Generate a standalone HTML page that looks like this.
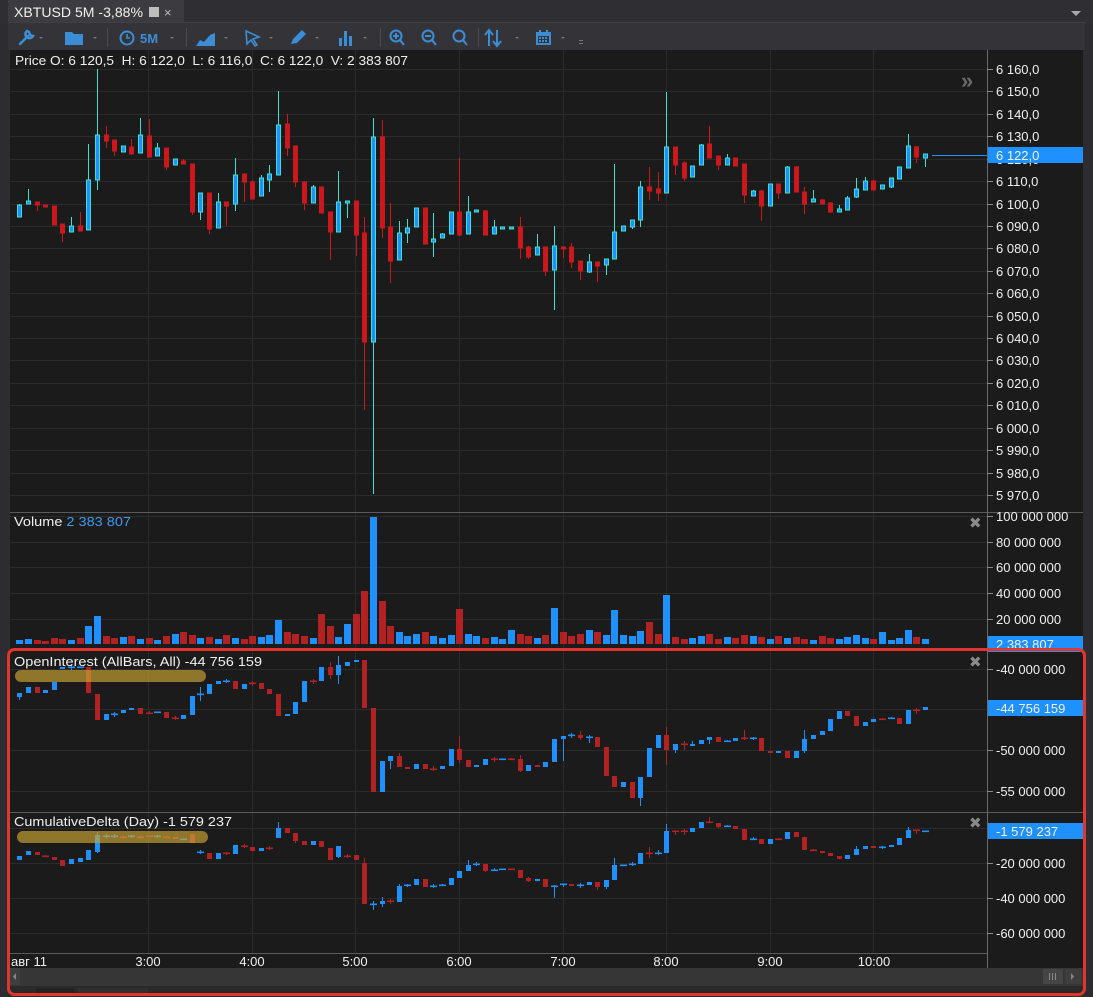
<!DOCTYPE html>
<html><head><meta charset="utf-8">
<style>
*{margin:0;padding:0;box-sizing:border-box}
html,body{width:1093px;height:997px;overflow:hidden;background:#2d2d31;font-family:"Liberation Sans","DejaVu Sans",sans-serif}
svg{display:block}
</style></head>
<body>
<svg id="s" width="1093" height="997" xmlns="http://www.w3.org/2000/svg" font-family="Liberation Sans, DejaVu Sans, sans-serif">
<rect x="0" y="0" width="1093" height="24" fill="#2e2e33"/>
<rect x="8" y="0" width="176" height="23" fill="#3b3b40"/>
<text x="14" y="17" font-size="13.5" fill="#f0f0f0" textLength="129" lengthAdjust="spacingAndGlyphs">XBTUSD 5M -3,88%</text>
<rect x="149" y="7" width="10" height="10" fill="#bdbdbd"/>
<text x="164" y="17" font-size="13" fill="#bdbdbd">×</text>
<path d="M1071 11 L1081 11 L1076 16 Z" fill="#aaa"/>
<rect x="8" y="22" width="1077" height="28" fill="#333338"/>
<line x1="8" y1="22.5" x2="1085" y2="22.5" stroke="#3f3f46"/>
<g fill="#3b8ed6" stroke="#3b8ed6">
 <path d="M20 44 L28 36 M27 31 a4 4 0 1 0 6 5 l-3 -1 l-1 -3 z" stroke-width="2.5" fill="none" stroke-linecap="round"/>
 <path d="M65 32 h7 l2 2 h9 v11 h-18 z" stroke="none"/>
 <circle cx="127" cy="38" r="6.5" fill="none" stroke-width="2"/>
 <path d="M127 34 v4 h3" fill="none" stroke-width="1.6"/>
 <path d="M196 46 L200 40 L204 42 L210 35 L215 33 L215 46 Z" stroke="none"/>
 <path d="M246 31 L259 37 L253 39 L257 45 L255 46 L251 40 L247 44 Z" fill="none" stroke-width="1.6"/>
 <path d="M291 44 L293 39 L302 30 L306 34 L297 43 Z" stroke="none"/>
 <rect x="339" y="38" width="3" height="8" stroke="none"/><rect x="344" y="31" width="3" height="15" stroke="none"/><rect x="349" y="36" width="3" height="10" stroke="none"/>
 <circle cx="396" cy="36" r="5.5" fill="none" stroke-width="2"/><path d="M400 40 L404 45 M393 36 h6 M396 33 v6" fill="none" stroke-width="2"/>
 <circle cx="428" cy="36" r="5.5" fill="none" stroke-width="2"/><path d="M432 40 L436 45 M425 36 h6" fill="none" stroke-width="2"/>
 <circle cx="459" cy="36" r="5.5" fill="none" stroke-width="2"/><path d="M463 40 L467 45" fill="none" stroke-width="2"/>
 <path d="M489 46 V31 M485 35 L489 30 L493 35 M497 30 V45 M493 41 L497 46 L501 41" fill="none" stroke-width="2"/>
 <rect x="536" y="32" width="15" height="13" stroke="none"/>
 <rect x="538" y="36" width="11" height="7" fill="#333338" stroke="none"/>
 <g stroke="none"><rect x="539" y="37" width="2" height="2"/><rect x="542" y="37" width="2" height="2"/><rect x="545" y="37" width="2" height="2"/><rect x="539" y="40" width="2" height="2"/><rect x="542" y="40" width="2" height="2"/><rect x="545" y="40" width="2" height="2"/></g>
 <rect x="539" y="30" width="2" height="4" stroke="none"/><rect x="546" y="30" width="2" height="4" stroke="none"/>
</g>
<text x="140" y="43" font-size="13" font-weight="bold" fill="#3b8ed6">5M</text>
<g fill="#777">
 <path d="M39 37 h4 l-2 2z"/><path d="M93 37 h4 l-2 2z"/><path d="M170 37 h4 l-2 2z"/><path d="M224 37 h4 l-2 2z"/><path d="M269 37 h4 l-2 2z"/><path d="M315 37 h4 l-2 2z"/><path d="M363 37 h4 l-2 2z"/><path d="M515 37 h4 l-2 2z"/><path d="M561 37 h4 l-2 2z"/>
 <rect x="579" y="40" width="4" height="1"/><rect x="579" y="43" width="4" height="1"/>
</g>
<g stroke="#4a4a50"><line x1="107.5" y1="28" x2="107.5" y2="47"/><line x1="186.5" y1="28" x2="186.5" y2="47"/><line x1="380.5" y1="28" x2="380.5" y2="47"/><line x1="478.5" y1="28" x2="478.5" y2="47"/></g>

<rect x="10" y="50" width="1073" height="918" fill="#1b1b1b"/>
<g id="grid" stroke="#2b2b2b" stroke-width="1"></g>
<g stroke="#5a5a5a"><line x1="10" y1="512.5" x2="1083" y2="512.5"/><line x1="10" y1="649.5" x2="1083" y2="649.5"/><line x1="10" y1="812.5" x2="1083" y2="812.5"/><line x1="10" y1="953.5" x2="987" y2="953.5"/></g>
<line x1="987.5" y1="50" x2="987.5" y2="968" stroke="#6a6a6a"/>
<g id="plot"></g>
<g id="ax" font-size="13" fill="#f0f0f0"></g>

<g font-size="13" fill="#f0f0f0">
<text x="15" y="65" textLength="393" lengthAdjust="spacingAndGlyphs">Price O: 6 120,5 &#160;H: 6 122,0 &#160;L: 6 116,0 &#160;C: 6 122,0 &#160;V: 2 383 807</text>
<text x="14" y="526" textLength="117" lengthAdjust="spacingAndGlyphs">Volume <tspan fill="#3d9bf0">2 383 807</tspan></text>
<text x="14" y="666" textLength="248" lengthAdjust="spacingAndGlyphs">OpenInterest (AllBars, All) -44 756 159</text>
<text x="14" y="826" textLength="218" lengthAdjust="spacingAndGlyphs">CumulativeDelta (Day) -1 579 237</text>
</g>
<text x="961" y="88" font-size="22" fill="#6a6a6a" font-weight="bold">»</text>
<g fill="#8a8a8a" font-size="15" font-weight="bold"><text x="969" y="528">✖</text><text x="969" y="667">✖</text><text x="969" y="828">✖</text></g>

<g font-size="13" fill="#f0f0f0" text-anchor="middle">
<text x="11" y="966" text-anchor="start">авг 11</text>
<text x="148" y="966">3:00</text><text x="252" y="966">4:00</text><text x="355" y="966">5:00</text><text x="459" y="966">6:00</text><text x="563" y="966">7:00</text><text x="666" y="966">8:00</text><text x="770" y="966">9:00</text><text x="874" y="966">10:00</text>
</g>
<rect x="10" y="968" width="1073" height="18" fill="#363636"/>
<rect x="10" y="968" width="10" height="17" fill="#3e3e3e"/>
<path d="M16 973 v7 l-3 -3.5z" fill="#888"/>
<rect x="1043" y="969" width="20" height="15" fill="#454545"/>
<g stroke="#888"><line x1="1049.5" y1="973" x2="1049.5" y2="980"/><line x1="1052.5" y1="973" x2="1052.5" y2="980"/><line x1="1055.5" y1="973" x2="1055.5" y2="980"/></g>
<rect x="1065" y="969" width="16" height="15" fill="#3e3e3e"/>
<path d="M1071 973 v7 l3 -3.5z" fill="#888"/>
<rect x="10" y="986" width="1073" height="9" fill="#2a2a2a"/>
<rect x="36" y="988" width="38" height="8" fill="#232323"/><rect x="78" y="988" width="70" height="8" fill="#303030"/>
<rect x="8.5" y="649.5" width="1076" height="345" rx="6" fill="none" stroke="#e0362e" stroke-width="3"/>
</svg>
<script>
var NS="http://www.w3.org/2000/svg";
function el(p,t,a){var e=document.createElementNS(NS,t);for(var k in a)e.setAttribute(k,a[k]);p.appendChild(e);return e}
var plot=document.getElementById('plot'),grid=document.getElementById('grid'),ax=document.getElementById('ax');
function X(i){return Math.round(19.3+8.626*i)+0.5}
var hx=[148,252,355,459,563,666,770,873];
hx.forEach(function(x){el(grid,'line',{x1:x+.5,y1:50,x2:x+.5,y2:953})});
function hl(y){el(grid,'line',{x1:10,y1:y+.5,x2:987,y2:y+.5})}
function lab(y,t){el(ax,'line',{x1:987,y1:y+.5,x2:993,y2:y+.5,stroke:'#8a8a8a'});var e=el(ax,'text',{x:996,y:y+5});e.textContent=t}
for(var k=0;k<20;k++){var y=Math.round(69+k*22.42);hl(y);var p=6160-k*10;var s=(p>=6000?'6 '+String(p-6000).padStart(3,'0'):'5 '+String(p-5000).padStart(3,'0'))+',0';lab(y,s)}
[[516,'100 000 000'],[542,'80 000 000'],[567,'60 000 000'],[593,'40 000 000'],[619,'20 000 000']].forEach(function(a){hl(a[0]);lab(a[0],a[1])});
[[669,'-40 000 000'],[709,null],[750,'-50 000 000'],[791,'-55 000 000']].forEach(function(a){hl(a[0]);if(a[1])lab(a[0],a[1])});
[[828,null],[863,'-20 000 000'],[898,'-40 000 000'],[933,'-60 000 000']].forEach(function(a){hl(a[0]);if(a[1])lab(a[0],a[1])});
function box(y,t){el(ax,'rect',{x:988,y:y-8,width:95,height:16,fill:'#1e90ff'});var e=el(ax,'text',{x:996,y:y+5});e.textContent=t}
box(155,'6 122,0');box(644,'2 383 807');box(708,'-44 756 159');box(831,'-1 579 237');
el(plot,'line',{x1:932,y1:155.5,x2:987,y2:155.5,stroke:'#1e90ff'});

function cand(i,d,st){
 var o=d[0],c=d[1],h=d.length>2?d[2]:Math.min(o,c),l=d.length>3?d[3]:Math.max(o,c);
 var x=X(i),up=c<o;
 if(st=='p'){
  var fc=up?'#1e90ff':'#cc171d',sc=up?'#3fe0cf':'#cc171d';
  el(plot,'line',{x1:x,y1:h,x2:x,y2:l,stroke:sc});
  var t=Math.min(o,c),b=Math.max(o,c);if(b-t<2)b=t+2;
  el(plot,'rect',{x:x-2,y:t,width:4,height:b-t,fill:fc,stroke:sc,'stroke-width':1});
 } else {
  var col=(o==c)?(d[4]?'#b22222':'#1e90ff'):(up?'#1e90ff':'#b22222');
  el(plot,'line',{x1:x,y1:h,x2:x,y2:l,stroke:col});
  var t=Math.min(o,c),b=Math.max(o,c);
  if(b-t<1.5){el(plot,'rect',{x:x-3.5,y:t-0.5,width:7,height:1.6,fill:col})}
  else el(plot,'rect',{x:x-2.5,y:t,width:5,height:b-t,fill:col});
 }
}
var P=[[217,205,204,217],[204,201,189,204],[202,205,202,211],[205,207],[206,225],[224,233,224,242],[232,226,217,232],[226,231,212,231],[230,180,144,230],[180,135,69,190],
[135,141,126,148],[140,151,140,156],[152,146],[147,154,139,154],[153,135,118,153],[136,157,119,157],[156,148,143,156],[148,167,148,170],[165,159],[161,164,159,164],
[164,212,164,215],[212,193,193,220],[193,229,193,234],[228,202,193,228],[202,206,202,226],[204,175,158,211],[174,182,174,202],[182,199,180,199],[196,178,175,196],[180,174,165,192],
[175,125,91,175],[124,148,114,156],[146,182,146,187],[182,203,182,210],[203,187,185,203],[187,213],[212,232,212,260],[232,202,171,232],[203,201,201,218],[201,235,201,256],
[233,342,217,410],[342,137,118,494],[137,228,120,238],[227,261,203,283],[260,233,221,260],[233,228,219,243],[227,208],[208,244],[242,239,213,257],[238,234,233,238],
[234,212],[212,235,158,236],[234,212,196,234],[212,210],[211,235,210,235],[234,227,220,234],[228,227],[228,227],[227,248,217,259],[247,257,246,259],
[255,247,234,255],[247,271,247,276],[270,246,226,310],[247,249,247,258],[247,262,243,268],[261,271,261,280],[272,262,254,273],[262,266,262,282],[265,259,259,275],[259,232,164,259],
[231,226],[227,220,220,229],[220,187,181,227],[187,191,167,200],[189,193,172,201],[193,147,92,193],[147,165,147,175],[163,178,161,181],[177,166],[165,145,144,165],
[144,158,126,158],[156,165,156,170],[165,158,154,165],[158,166],[164,195,164,203],[196,191,190,196],[191,206,190,221],[206,184],[184,193,184,199],[193,167,166,193],
[167,192,166,192],[192,204,187,214],[202,199,190,202],[200,204,199,204],[203,212,202,213],[212,209,205,212],[210,198,196,210],[197,189,178,198],[190,181,177,190],[181,190,180,190],
[189,185],[187,178,178,188],[179,167],[168,146,134,168],[147,157,146,163],[158,154,154,167]];
P.forEach(function(d,i){cand(i,d,'p')});
var V=[4,5,4,3,6,5,4,6,18,28,8,6,7,8,5,6,4,8,10,12,9,6,7,5,9,6,5,8,7,9,24,12,10,8,6,30,18,7,20,30,53,127,43,18,12,8,10,12,8,6,9,35,10,8,6,7,5,14,10,8,6,9,36,12,8,10,14,12,9,34,9,8,13,22,10,49,7,5,6,8,10,5,7,6,9,8,7,5,8,6,7,5,4,8,6,5,7,9,6,5,12,4,6,14,7,5];
V.forEach(function(h,i){var d=P[i];var up=d[1]<d[0];el(plot,'rect',{x:X(i)-3.5,y:644-h,width:7,height:h,fill:up?'#1e90ff':'#b22222'})});
var O=[[697,693,693,700],[693,687],[687,693],[693,690],[690,682],[669,667],[667,667,664,670],[668,667],[667,693],[694,720],
[720,714],[714,714,712,717],[713,710],[710,708],[708,714],[713,713,711,714,1],[712,712],[712,718],[718,718,716,720,1],[719,715],
[715,696],[694,694,687,701],[694,684],[684,681],[681,681,679,683],[681,689],[689,684],[683,683,681,686,1],[683,689],[689,694],
[694,716],[716,714],[714,702],[702,681],[681,681,679,684,1],[681,667],[667,675,662,679],[675,665,656,684],[666,662],[662,660],
[660,708],[708,792],[792,761],[761,756,756,769],[756,767,753,767],[767,769],[769,764],[764,769],[769,769,766,771,1],[769,766],
[766,749],[749,760,736,763],[760,767],[767,765],[765,759],[759,759,757,762,1],[759,759],[759,759,758,760,1],[759,771,755,772],[771,765],
[765,767],[767,762],[762,739],[739,736,736,761],[735,735,733,738],[735,738,731,740],[737,737,735,743],[737,747],[747,776],[776,787],
[787,782],[782,798],[798,777,777,806],[777,748],[748,735],[735,750,727,765],[750,744,744,753],[744,744,741,750,1],[746,744,741,746],[744,740],
[740,737,737,744],[737,742],[741,741,740,742],[741,738],[738,738,730,740,1],[738,738,737,740],[738,751],[751,753],[753,751],[751,758],
[758,751],[751,739,730,753],[739,735],[735,731],[731,719],[719,711],[711,716],[716,726],[726,722],[722,719],
[719,719,718,720,1],[718,718,717,719],[718,724],[724,710],[710,710,708,714,1],[710,707]];
O.forEach(function(d,i){cand(i,d,'i')});
var C=[[860,856],[855,851],[852,855],[856,856,855,857,1],[857,860],[860,866],[864,859],[862,858],[860,850],[852,835,832,853],
[836,836,834,838],[836,836,834,838],[837,837,835,839,1],[836,836,835,838],[837,837,835,838,1],[836,837],[836,836,835,838],[837,837,836,838,1],[837,839],[839,839],
[834,843],[852,852,850,854],[853,859],[859,853],[853,853,852,855,1],[854,845],[846,846,844,848,1],[847,851],[851,848],[848,848,846,850,1],
[838,828,822,838],[828,833],[833,841,833,843],[841,845],[845,841],[841,847],[848,860],[857,846,846,858],[856,856,854,858,1],[855,860],
[863,904,858,904],[904,904,901,910],[904,901,897,907],[901,901,899,904,1],[902,886,884,902],[885,885,884,887],[885,879],[879,887],[886,886,884,888],[885,885,884,886],
[885,878],[878,871],[871,865,860,871],[864,864,862,866],[864,871,864,872],[870,870,868,871],[869,869],[869,869,869,869,1],[870,878],[878,881,877,882],
[881,879],[879,887],[886,886,885,898],[884,884,884,887],[884,886],[885,885,883,888],[885,882],[882,887,882,890],[887,880,880,889],[880,865,858,880],
[865,865],[864,864,862,866],[864,853],[853,853,847,858,1],[853,853,850,855],[853,831,824,853],[831,831,831,835,1],[831,831,829,835,1],[832,828],[828,822],
[822,822,817,823,1],[823,827,823,828],[826,826,825,827],[826,829],[829,840],[839,839,837,840],[839,844],[844,839],[839,839,839,839,1],[839,832],
[832,837],[837,850],[850,850,849,851,1],[851,853],[853,856],[856,859],[859,855],[855,849,846,855],[849,846],[846,848],
[847,847,846,849],[847,845],[845,838],[838,830,827,838],[830,830,830,834,1],[831,831]];
C.forEach(function(d,i){cand(i,d,'i')});
el(plot,'rect',{x:15,y:670,width:191,height:12,rx:6,fill:'#c9a233','fill-opacity':0.68});
el(plot,'rect',{x:17,y:831,width:191,height:12,rx:6,fill:'#c9a233','fill-opacity':0.68});
</script>
</body></html>
